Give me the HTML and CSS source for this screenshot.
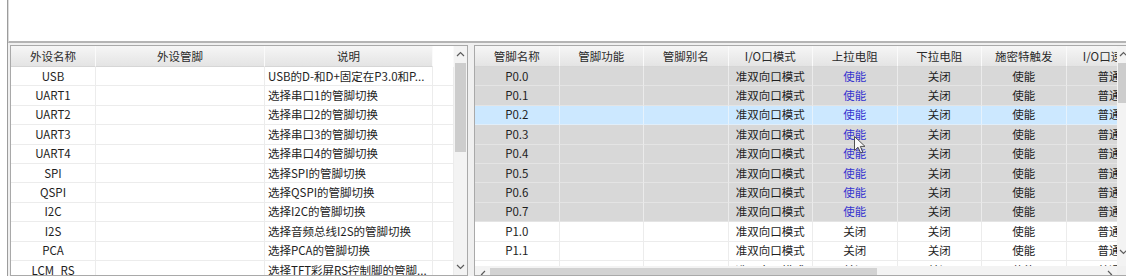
FILE: index.html
```html
<!DOCTYPE html>
<html lang="zh-CN">
<head>
  <meta charset="UTF-8" />
  <title>管脚配置</title>
  <link rel="stylesheet" href="styles.css">
</head>
<body>
  <div class="frame">
    <div class="top"></div>

    <div class="main">
      <!-- 外设列表 -->
      <section class="panel left-panel">
        <div class="grid-wrap">
          <table class="grid periph">
            <colgroup><col class="c-name"><col class="c-pin"><col class="c-desc"><col class="c-fill"></colgroup>
            <thead>
              <tr><th>外设名称</th><th>外设管脚</th><th>说明</th><th class="blank"></th></tr>
            </thead>
            <tbody>
              <tr><td>USB</td><td></td><td class="desc">USB的D-和D+固定在P3.0和P...</td><td></td></tr>
              <tr><td>UART1</td><td></td><td class="desc">选择串口1的管脚切换</td><td></td></tr>
              <tr><td>UART2</td><td></td><td class="desc">选择串口2的管脚切换</td><td></td></tr>
              <tr><td>UART3</td><td></td><td class="desc">选择串口3的管脚切换</td><td></td></tr>
              <tr><td>UART4</td><td></td><td class="desc">选择串口4的管脚切换</td><td></td></tr>
              <tr><td>SPI</td><td></td><td class="desc">选择SPI的管脚切换</td><td></td></tr>
              <tr><td>QSPI</td><td></td><td class="desc">选择QSPI的管脚切换</td><td></td></tr>
              <tr><td>I2C</td><td></td><td class="desc">选择I2C的管脚切换</td><td></td></tr>
              <tr><td>I2S</td><td></td><td class="desc">选择音频总线I2S的管脚切换</td><td></td></tr>
              <tr><td>PCA</td><td></td><td class="desc">选择PCA的管脚切换</td><td></td></tr>
              <tr><td>LCM_RS</td><td></td><td class="desc">选择TFT彩屏RS控制脚的管脚...</td><td></td></tr>
            </tbody>
          </table>
        </div>
        <div class="vscroll">
          <div class="sbtn"><svg width="9" height="6" viewBox="0 0 9 6"><polyline points="1,5 4.5,1.5 8,5" /></svg></div>
          <div class="thumb thumb-left"></div>
          <div class="spacer"></div>
          <div class="sbtn"><svg width="9" height="6" viewBox="0 0 9 6"><polyline points="1,1 4.5,4.5 8,1" /></svg></div>
        </div>
      </section>

      <!-- 管脚列表 -->
      <section class="panel right-panel">
        <div class="right-body">
          <div class="grid-wrap">
            <table class="grid pins">
              <colgroup><col><col><col><col><col><col><col><col></colgroup>
              <thead>
                <tr><th>管脚名称</th><th>管脚功能</th><th>管脚别名</th><th>I/O口模式</th><th>上拉电阻</th><th>下拉电阻</th><th>施密特触发</th><th class="last">I/O口速度</th></tr>
              </thead>
              <tbody>
                <tr class="on"><td>P0.0</td><td></td><td></td><td>准双向口模式</td><td class="blue">使能</td><td>关闭</td><td>使能</td><td class="speed">普通模式</td></tr>
                <tr class="on"><td>P0.1</td><td></td><td></td><td>准双向口模式</td><td class="blue">使能</td><td>关闭</td><td>使能</td><td class="speed">普通模式</td></tr>
                <tr class="sel"><td>P0.2</td><td></td><td></td><td>准双向口模式</td><td class="blue">使能</td><td>关闭</td><td>使能</td><td class="speed">普通模式</td></tr>
                <tr class="on"><td>P0.3</td><td></td><td></td><td>准双向口模式</td><td class="blue">使能</td><td>关闭</td><td>使能</td><td class="speed">普通模式</td></tr>
                <tr class="on"><td>P0.4</td><td></td><td></td><td>准双向口模式</td><td class="blue">使能</td><td>关闭</td><td>使能</td><td class="speed">普通模式</td></tr>
                <tr class="on"><td>P0.5</td><td></td><td></td><td>准双向口模式</td><td class="blue">使能</td><td>关闭</td><td>使能</td><td class="speed">普通模式</td></tr>
                <tr class="on"><td>P0.6</td><td></td><td></td><td>准双向口模式</td><td class="blue">使能</td><td>关闭</td><td>使能</td><td class="speed">普通模式</td></tr>
                <tr class="on"><td>P0.7</td><td></td><td></td><td>准双向口模式</td><td class="blue">使能</td><td>关闭</td><td>使能</td><td class="speed">普通模式</td></tr>
                <tr><td>P1.0</td><td></td><td></td><td>准双向口模式</td><td>关闭</td><td>关闭</td><td>使能</td><td class="speed">普通模式</td></tr>
                <tr><td>P1.1</td><td></td><td></td><td>准双向口模式</td><td>关闭</td><td>关闭</td><td>使能</td><td class="speed">普通模式</td></tr>
                <tr><td>P1.2</td><td></td><td></td><td>准双向口模式</td><td>关闭</td><td>关闭</td><td>使能</td><td class="speed">普通模式</td></tr>
              </tbody>
            </table>
          </div>
          <div class="vscroll short">
            <div class="sbtn"><svg width="9" height="6" viewBox="0 0 9 6"><polyline points="1,5 4.5,1.5 8,5" /></svg></div>
            <div class="thumb thumb-right"></div>
            <div class="spacer"></div>
            <div class="sbtn"><svg width="9" height="6" viewBox="0 0 9 6"><polyline points="1,1 4.5,4.5 8,1" /></svg></div>
          </div>
        </div>
        <div class="hscroll">
          <div class="hbtn"><svg width="6" height="9" viewBox="0 0 6 9"><polyline points="5,1 1.5,4.5 5,8" /></svg></div>
          <div class="hthumb"></div>
          <div class="spacer"></div>
          <div class="hbtn"><svg width="6" height="9" viewBox="0 0 6 9"><polyline points="1,1 4.5,4.5 1,8" /></svg></div>
          <div class="corner"></div>
        </div>
      </section>
    </div>

    <!-- 鼠标指针 -->
    <svg class="cursor" width="12" height="18" viewBox="0 0 12 18">
      <path d="M0.5,0.5 L0.5,14.5 L4,11.2 L6.6,17 L8.8,16 L6.3,10.4 L11,10.4 Z" />
    </svg>
  </div>
</body>
</html>
```

FILE: styles.css
```css
* {
  box-sizing: border-box;
  margin: 0;
  padding: 0;
}
body {
  background: #fff;
  font-family: "Noto Sans CJK SC", "Noto Sans", sans-serif;
  font-size: 11.5px;
  color: #1e1e1e;
  overflow: hidden;
}
.frame {
  position: relative;
  height: 276px;
  margin-left: 7px;
  border-left: 1px solid #9c9c9c;
  display: flex;
  flex-direction: column;
  overflow: hidden;
}
.top {
  height: 43px;
  flex-shrink: 0;
  background: #fff;
  border-left: 1px solid #dcdcdc;
  border-bottom: 2px solid #b4b4b4;
}
.main {
  flex: 1;
  display: flex;
  gap: 6px;
  padding: 2px 0 0 2px;
  background: #f0f0f0;
  overflow: hidden;
}
.panel {
  background: #fff;
  border: 1px solid #a9a9a9;
  height: 231px;
  flex-shrink: 0;
  overflow: hidden;
}
.left-panel {
  width: 458px;
  display: flex;
}
.right-panel {
  width: 656px;
  border-right: none;
  display: flex;
  flex-direction: column;
}
.right-body {
  height: 220px;
  display: flex;
  flex-shrink: 0;
}
.grid-wrap {
  flex: 1;
  overflow: hidden;
}

/* tables */
.grid {
  border-collapse: separate;
  border-spacing: 0;
  table-layout: fixed;
}
.grid th {
  height: 21px;
  font-weight: normal;
  color: #2a2a2a;
  text-align: center;
  white-space: nowrap;
  background: linear-gradient(#f6f6f6, #e4e4e4);
  border-right: 1px solid #fafafa;
  border-bottom: 1px solid #d6d6d6;
  line-height: 18px;
}
.grid th.blank {
  background: #fff;
  border-bottom: none;
}
.grid tbody tr {
  height: 19.4px;
}
.grid td {
  padding: 0 4px;
  line-height: 17px;
  text-align: center;
  white-space: nowrap;
  overflow: hidden;
  border-right: 1px solid #ececec;
  border-bottom: 1px solid #ececec;
}
.periph {
  width: 443px;
}
.periph .c-name { width: 85px; }
.periph .c-pin { width: 169px; }
.periph .c-desc { width: 168px; }
.periph .c-fill { width: 21px; }
.periph td.desc {
  text-align: left;
  padding-left: 3px;
}
.pins {
  width: 676px;
}
.pins col {
  width: 84.5px;
}
.pins tr.on td {
  background: #d8d8d8;
  border-right-color: #ebebeb;
  border-bottom-color: #e4e4e4;
}
.pins tr.sel td {
  background: #cce8ff;
  border-right-color: #e6f2fc;
  border-bottom-color: #e0eefa;
}
.pins td.blue {
  color: #3535cf;
}
.pins td.speed {
  text-align: left;
  padding-left: 31px;
}

/* scrollbars */
.vscroll {
  width: 13px;
  flex-shrink: 0;
  background: #f3f3f3;
  display: flex;
  flex-direction: column;
}
.vscroll.short {
  padding-bottom: 6px;
}
.sbtn {
  height: 16px;
  display: flex;
  align-items: center;
  justify-content: center;
}
.sbtn svg polyline,
.hbtn svg polyline {
  fill: none;
  stroke: #5c5c5c;
  stroke-width: 1.2;
}
.thumb {
  margin: 1px 1px 0;
  background: #cdcdcd;
}
.thumb-left { height: 89px; }
.thumb-right { height: 40px; }
.spacer {
  flex: 1;
}
.hscroll {
  height: 17px;
  flex-shrink: 0;
  display: flex;
  background: #f3f3f3;
}
.hbtn {
  width: 15px;
  display: flex;
  align-items: center;
  justify-content: center;
}
.hthumb {
  width: 387px;
  margin: 2px 0 3px;
  background: #d2d2d2;
}
.corner {
  width: 13px;
  background: #f0f0f0;
}

.cursor {
  position: absolute;
  left: 846px;
  top: 136px;
  opacity: 0.85;
}
.cursor path {
  fill: #fff;
  stroke: #3a3a3a;
  stroke-width: 1;
}
```
